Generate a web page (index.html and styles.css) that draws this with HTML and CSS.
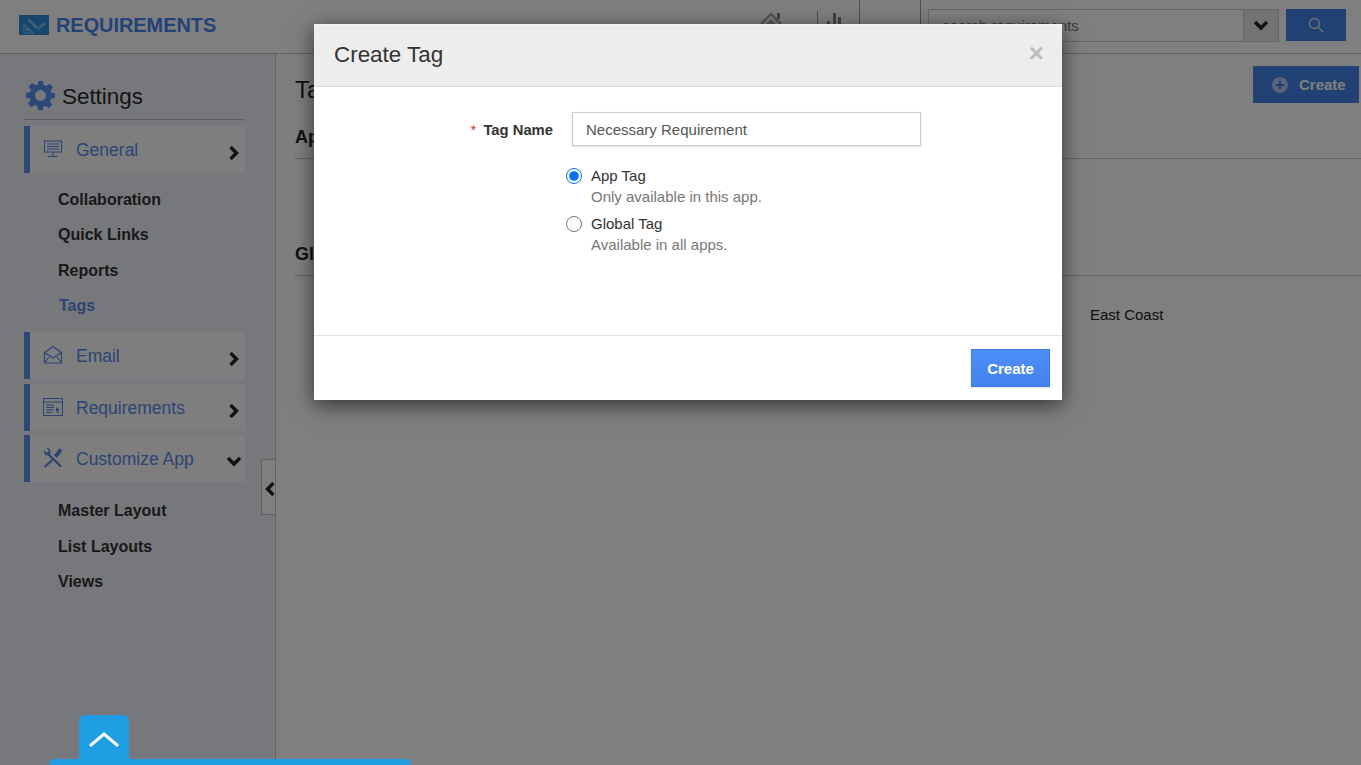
FILE: index.html
```html
<!DOCTYPE html>
<html lang="en">
<head>
<meta charset="utf-8">
<title>Requirements - Create Tag</title>
<link rel="stylesheet" href="styles.css">
</head>
<body>
<div class="page">
  <header class="topbar">
    <div class="brand">
      <svg class="brand-icon" viewBox="0 0 30 20"><rect width="30" height="20" fill="#2f8fd8"/><path d="M5 18V9l9 9zM7.500 15.500h2.500l-2.500-2.500z" fill="none" stroke="#7fb8e8" stroke-width="1.200"/><path d="M8 5l2-2 9 9-2 2zM19 12l6-5 2 2-6 5-3 1z" fill="#7fb8e8"/></svg>
      <span class="brand-name">REQUIREMENTS</span>
    </div>
    <div class="top-icons">
      <svg class="home-icon" viewBox="0 0 24 14"><path d="M1 13L11 3l10 10" fill="none" stroke="#aaa" stroke-width="2.500"/><rect x="17" y="2" width="3" height="6" fill="#888"/><path d="M5 14l6-6 6 6z" fill="#aaa"/></svg>
      <svg class="chart-icon" viewBox="0 0 24 14"><path d="M.5 0v14" stroke="#999" stroke-width="1"/><rect x="10" y="10" width="3" height="4" fill="#888"/><rect x="16" y="2" width="3" height="12" fill="#888"/><rect x="21" y="6" width="3" height="8" fill="#888"/></svg>
    </div>
    <div class="top-cell"></div>
    <div class="search-cell">
      <div class="search-box">
        <span class="search-text">search requirements</span>
        <span class="search-drop"><svg class="chev-icon" viewBox="0 0 16 11"><path d="M2 2l6 6 6-6" fill="none" stroke="#222" stroke-width="3.400"/></svg></span>
      </div>
      <button class="search-btn"><svg class="search-icon" viewBox="0 0 16 16"><circle cx="6.500" cy="6.500" r="5" fill="none" stroke="#dfe6f0" stroke-width="1.300"/><path d="M10.500 10.500l4.500 4.500" stroke="#dfe6f0" stroke-width="1.500"/></svg></button>
    </div>
  </header>
  <div class="main">
    <aside class="sidebar">
      <h2 class="settings">
        <svg class="gear" viewBox="0 0 24 24"><path fill-rule="evenodd" d="M10 0h4l.7 3.300 1.900.8 2.900-1.800 2.800 2.800-1.800 2.900.8 1.900L24 10v4l-3.300.7-.8 1.900 1.800 2.900-2.800 2.800-2.900-1.800-1.900.8L14 24h-4l-.7-3.300-1.900-.8-2.900 1.800-2.800-2.800 1.800-2.900-.8-1.900L0 14v-4l3.300-.7.8-1.900-1.800-2.900 2.800-2.800 2.900 1.800 1.900-.8zM12 7.500a4.500 4.500 0 1 0 0 9 4.500 4.500 0 0 0 0-9z" fill="#5590f0"/></svg>
        <span class="settings-label">Settings</span>
      </h2>
      <nav class="nav">
        <a class="nav-item">
          <svg class="nav-icon" viewBox="0 0 20 20"><path d="M1.500 2h17v11h-17zM4 5h12M4 7.500h12M4 10h12M10 13v4M5 17.500h10" fill="none" stroke="#5b8ae6" stroke-width="1.100"/></svg>
          <span class="nav-label">General</span>
          <svg class="nav-chev" viewBox="0 0 12 16"><path d="M2.500 2l6 6-6 6" fill="none" stroke="#222" stroke-width="3.400"/></svg>
        </a>
        <ul class="subnav">
          <li>Collaboration</li>
          <li>Quick Links</li>
          <li>Reports</li>
          <li class="active">Tags</li>
        </ul>
        <a class="nav-item">
          <svg class="nav-icon" viewBox="0 0 20 20"><path d="M1.500 7.500L10 1.500l8.500 6V18h-17zM1.500 7.500L10 13l8.500-5.500M1.500 18L7.500 10M18.500 18l-6-8" fill="none" stroke="#5b8ae6" stroke-width="1.200"/></svg>
          <span class="nav-label">Email</span>
          <svg class="nav-chev" viewBox="0 0 12 16"><path d="M2.500 2l6 6-6 6" fill="none" stroke="#222" stroke-width="3.400"/></svg>
        </a>
        <a class="nav-item nav-tight">
          <svg class="nav-icon" viewBox="0 0 20 20"><path d="M.5 1.500h19v17H.5zM.5 5h19" fill="none" stroke="#5b8ae6" stroke-width="1.100"/><path d="M3 8h8M3 10.500h8M3 13h8M3 15.500h6" stroke="#5b8ae6" stroke-width="1.100"/><path d="M13 10l4 3-2 .5 1 2.500-1 .4-1-2.500-1 1z" fill="#5b8ae6"/></svg>
          <span class="nav-label">Requirements</span>
          <svg class="nav-chev" viewBox="0 0 12 16"><path d="M2.500 2l6 6-6 6" fill="none" stroke="#222" stroke-width="3.400"/></svg>
        </a>
        <a class="nav-item nav-tight">
          <svg class="nav-icon" viewBox="0 0 20 20"><path d="M4 5l14 13.500" fill="none" stroke="#5b8ae6" stroke-width="2.400"/><path d="M1 2.500l3 2.500 2-2-2.500-3C6.500-.5 8.500 3 7 6L4.500 7.500C2 7.500.5 5 1 2.500z" fill="#5b8ae6"/><path d="M11 10.500L1.500 19" stroke="#5b8ae6" stroke-width="2"/><path d="M12.500 8.500L18 1.500" stroke="#5b8ae6" stroke-width="4"/></svg>
          <span class="nav-label">Customize App</span>
          <svg class="nav-chev nav-chev-down" viewBox="0 0 16 11"><path d="M2 2l6 6 6-6" fill="none" stroke="#222" stroke-width="3.400"/></svg>
        </a>
        <ul class="subnav subnav-last">
          <li>Master Layout</li>
          <li>List Layouts</li>
          <li>Views</li>
        </ul>
      </nav>
      <button class="collapse"><svg class="collapse-icon" viewBox="0 0 12 16"><path d="M9.500 2l-6 6 6 6" fill="none" stroke="#222" stroke-width="3.400"/></svg></button>
    </aside>
    <section class="content">
      <div class="content-head">
        <h1 class="page-title">Tags</h1>
        <button class="create-top">
          <svg class="plus-icon" viewBox="0 0 16 16"><circle cx="8" cy="8" r="8" fill="#b0c8f0"/><path d="M8 4v8M4 8h8" stroke="#4280e6" stroke-width="2.200"/></svg>
          <span>Create</span>
        </button>
      </div>
      <h3 class="group-title">App Tags</h3>
      <div class="group-body group-app"></div>
      <h3 class="group-title">Global Tags</h3>
      <div class="group-body group-global"><span class="tag">East Coast</span></div>
    </section>
  </div>
</div>

<div class="backdrop"></div>

<div class="modal">
  <div class="modal-head">
    <h2 class="modal-title">Create Tag</h2>
    <span class="modal-close">×</span>
  </div>
  <div class="modal-body">
    <div class="field">
      <label class="field-label"><span class="req">*</span> Tag Name</label>
      <input class="field-input" type="text" value="Necessary Requirement">
    </div>
    <div class="radio-row">
      <input class="radio" type="radio" name="scope" checked>
      <div>
        <div class="radio-title">App Tag</div>
        <div class="radio-hint">Only available in this app.</div>
      </div>
    </div>
    <div class="radio-row">
      <input class="radio" type="radio" name="scope">
      <div>
        <div class="radio-title">Global Tag</div>
        <div class="radio-hint">Available in all apps.</div>
      </div>
    </div>
  </div>
  <div class="modal-foot">
    <button class="btn-create">Create</button>
  </div>
</div>

<div class="help-dock">
  <div class="help-tab"><svg class="help-chev" viewBox="0 0 30 16"><path d="M2 14L15 3l13 11" fill="none" stroke="#fff" stroke-width="3" stroke-linecap="round"/></svg></div>
  <div class="help-bar"></div>
</div>
</body>
</html>
```
FILE: styles.css
```css
* { box-sizing: border-box; }
html, body { margin: 0; height: 100%; overflow: hidden; }
body { font-family: "Liberation Sans", Arial, sans-serif; color: #222; background: #fff; position: relative; }
h1, h2, h3, ul { margin: 0; padding: 0; font-weight: normal; }
button { font-family: inherit; border: 0; padding: 0; }

.page { display: flex; flex-direction: column; height: 765px; }

.topbar { height: 54px; flex: none; display: flex; align-items: stretch; background: #fff; border-bottom: 1px solid #c4c4c4; }
.brand { width: 746px; display: flex; align-items: center; padding: 0 0 3px 19px; }
.brand-icon { width: 30px; height: 20px; margin-right: 7px; }
.brand-name { font-size: 19.900px; font-weight: bold; color: #4585f0; }
.top-icons { width: 113px; display: flex; align-items: flex-start; padding: 11px 0 0 14px; gap: 33px; }
.home-icon { width: 24px; height: 14px; }
.chart-icon { width: 24px; height: 14px; }
.top-cell { width: 62px; border-left: 1px solid #9a9a9a; border-right: 1px solid #9a9a9a; }
.search-cell { flex: 1; display: flex; padding: 9px 15px 0 7px; }
.search-box { width: 351px; height: 33px; display: flex; justify-content: space-between; border: 1px solid #ccc; background: #fff; }
.search-text { font-size: 15px; color: #777; padding: 7px 0 0 13px; }
.search-drop { width: 35px; background: #e6e6e6; border-left: 1px solid #ccc; display: flex; align-items: center; justify-content: center; }
.chev-icon { width: 16px; height: 11px; }
.search-btn { width: 60px; height: 32px; margin-left: 7px; background: #4280e6; display: flex; align-items: center; justify-content: center; }
.search-icon { width: 16px; height: 16px; }

.main { flex: 1; display: flex; min-height: 0; }
.sidebar { width: 276px; flex: none; position: relative; background: #eef0f8; border-right: 1px solid #c4c4c4; padding: 26px 30px 0 24px; }
.settings { display: flex; align-items: center; gap: 7px; height: 40px; font-size: 22.400px; color: #2a2a2a; border-bottom: 1px solid #c4c4c4; padding: 0 0 8px 2px; }
.settings-label { padding-top: 2px; }
.gear { width: 29px; height: 29px; }
.nav { margin-top: 6px; }
.nav-item { display: flex; align-items: center; height: 47px; margin-bottom: 5px; background: #fdfdfd; border-left: 6px solid #5b8ee8; padding: 0 3px 0 13px; }
.nav-tight { margin-bottom: 4px; }
.nav-icon { width: 20px; height: 20px; flex: none; margin-bottom: 1px; }
.nav-label { font-size: 17.500px; color: #5b8ae6; margin-left: 13px; flex: 1; padding-top: 1px; }
.nav-chev { width: 12px; height: 16px; margin: 6px 2px 0 0; }
.nav-chev-down { width: 16px; height: 11px; margin: 6px 0 0 0; }
.subnav { list-style: none; padding: 4px 0 8.500px 34px; }
.subnav-last { padding-top: 7.400px; }
.subnav li { height: 35.400px; line-height: 35px; font-size: 16px; font-weight: bold; color: #333; }
.subnav li.active { color: #5b8ae6; padding-left: 1px; }
.collapse { position: absolute; right: 0; top: 405px; width: 14px; height: 56px; background: #fff; border: 1px solid #c4c4c4; border-right: 0; padding-top: 4px; display: flex; align-items: center; justify-content: flex-end; }
.collapse-icon { width: 12px; height: 16px; flex: none; margin-right: -1px; }

.content { flex: 1; background: #fff; padding: 12px 2px 0 19px; }
.content-head { display: flex; justify-content: space-between; align-items: flex-start; height: 60px; }
.page-title { font-size: 24px; color: #222; padding-top: 10px; }
.create-top { width: 106px; height: 37px; display: flex; align-items: center; background: #4280e6; border: 1px solid #5088ea; color: #fff; font-size: 15px; font-weight: bold; padding-left: 18px; gap: 11px; }
.plus-icon { width: 16px; height: 16px; }
.group-title { font-size: 18px; font-weight: bold; color: #222; height: 33px; line-height: 22px; border-bottom: 1px solid #ccc; margin-right: -2px; }
.group-app { height: 84px; }
.group-global { height: 60px; padding: 30px 0 0 795px; }
.tag { font-size: 15px; color: #222; }

.backdrop { position: absolute; inset: 0; background: rgba(0, 0, 0, 0.5); }

.modal { position: absolute; left: 314px; top: 24px; width: 748px; height: 376px; background: #fff; box-shadow: 0 5px 20px rgba(0, 0, 0, 0.6); display: flex; flex-direction: column; }
.modal-head { height: 63px; flex: none; display: flex; align-items: center; justify-content: space-between; background: #ededed; border-top: 1px solid #f4f4f4; border-bottom: 1px solid #ddd; padding: 0 18px 2px 20px; }
.modal-title { font-size: 22.400px; color: #333; }
.modal-close { font-size: 26px; font-weight: bold; color: #bcbcbc; line-height: 1; padding-bottom: 3px; }
.modal-body { flex: 1; padding: 25px 0 0; }
.field { display: flex; align-items: center; height: 34px; margin-bottom: 20px; }
.field-label { width: 239px; text-align: right; font-size: 14.800px; font-weight: bold; color: #333; padding-top: 1px; }
.req { color: #d33; font-weight: normal; margin-right: 3px; }
.field-input { width: 349px; height: 34px; margin-left: 19px; border: 1px solid #ccc; box-shadow: 0 1px 2px rgba(0, 0, 0, 0.12); padding: 0 13px; font: 15px "Liberation Sans", Arial, sans-serif; color: #555; outline: 0; background: #fff; }
.radio-row { display: flex; gap: 9px; padding-left: 252px; height: 48px; }
.radio { width: 16px; height: 16px; margin: 2px 0 0; accent-color: #0b6ff2; flex: none; }
.radio-title { font-size: 15px; line-height: 19px; color: #333; }
.radio-hint { font-size: 15px; line-height: 21px; color: #777; margin-top: 1px; }
.modal-foot { height: 65px; flex: none; border-top: 1px solid #e5e5e5; display: flex; justify-content: flex-end; align-items: flex-start; padding: 13px 12px 0 0; }
.btn-create { width: 79px; height: 38px; background: linear-gradient(#4d8ffa, #4583ee); border: 1px solid #3a7cf0; color: #fff; font-size: 15px; font-weight: bold; box-shadow: 0 1px 2px rgba(0, 0, 0, 0.1); }

.help-dock { position: absolute; left: 49px; bottom: 0; width: 362px; height: 50px; }
.help-tab { width: 50px; height: 46px; margin-left: 30px; background: #1e9de2; border-radius: 6px 6px 0 0; display: flex; justify-content: center; padding-top: 16px; }
.help-chev { width: 30px; height: 16px; }
.help-bar { height: 6px; margin-top: -2px; background: #1e9de2; border-radius: 5px 5px 0 0; }
```
